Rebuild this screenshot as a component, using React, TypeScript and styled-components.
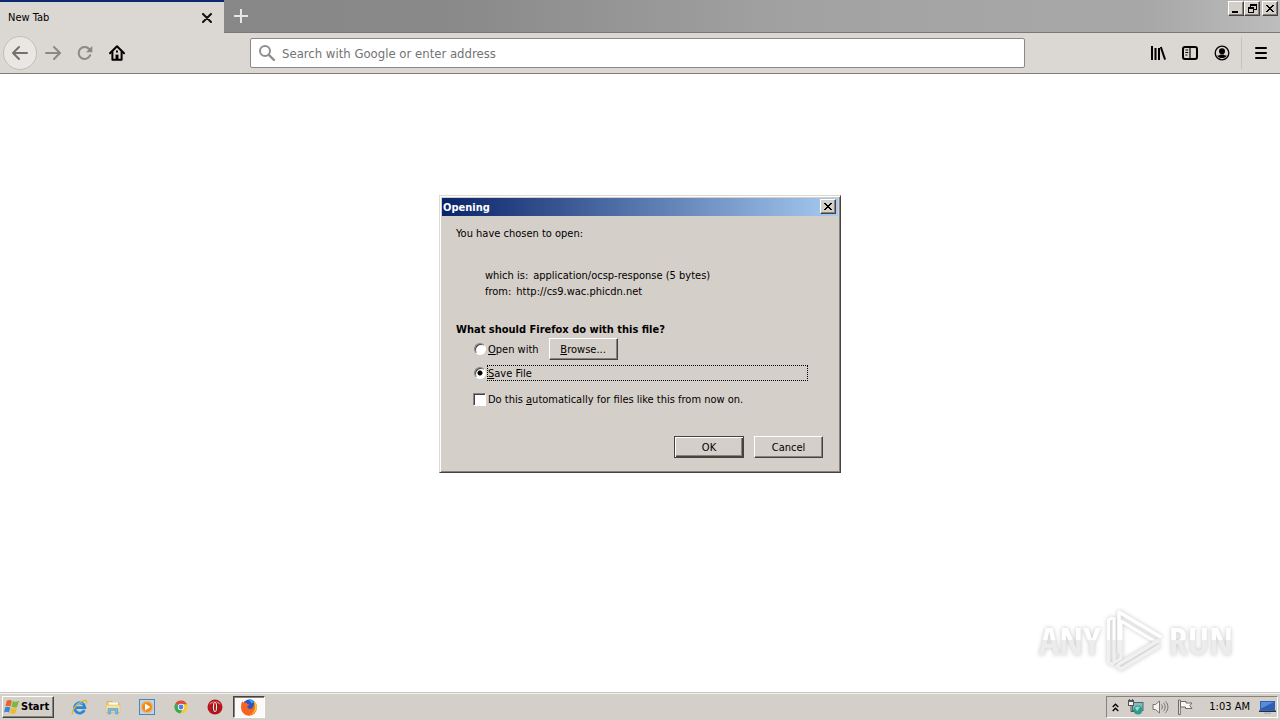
import React, { useState } from "react";
import styled, { createGlobalStyle, css } from "styled-components";

const GlobalStyle = createGlobalStyle`
  *, *::before, *::after { box-sizing: border-box; }
  body {
    margin: 0;
    background: #fff;
    color: #000;
    font-family: "DejaVu Sans Condensed", "DejaVu Sans", sans-serif;
    font-size: 11px;
    line-height: 16px;
  }
  button, input { font: inherit; color: inherit; margin: 0; padding: 0; border-radius: 0; }
  svg { display: block; flex: none; }
`;

const face = "#d5cfc9";

const raised = css`
  border: 1px solid;
  border-color: #fff #45423f #45423f #fff;
  box-shadow: inset -1px -1px 0 #86827d;
`;

const Screen = styled.div`
  display: flex;
  flex-direction: column;
  min-height: 100vh;
`;

/* ---------- Browser chrome ---------- */

const TabStrip = styled.header`
  display: flex;
  height: 33px;
  background: linear-gradient(90deg, #868686 0%, #898989 35%, #a2a2a2 62%, #a8a8a8 90%, #bdbdbd 100%);
`;

const Tab = styled.div`
  display: flex;
  align-items: center;
  justify-content: space-between;
  width: 224px;
  padding: 0 8px;
  border-top: 2px solid #0d2770;
  background: #dbd7d2;
`;

const StripRest = styled.div`
  flex: 1;
  display: flex;
  align-items: flex-start;
  justify-content: space-between;
  border-bottom: 1px solid #7c7975;
`;

const PlainButton = styled.button<{ $w: number; $h: number }>`
  display: flex;
  align-items: center;
  justify-content: center;
  width: ${(p) => p.$w}px;
  height: ${(p) => p.$h}px;
  border: 0;
  background: none;
`;

const WindowControls = styled.div`
  display: flex;
  padding: 1px 2px 0 0;
`;

const CaptionButton = styled.button<{ $gap?: boolean }>`
  ${raised}
  display: flex;
  align-items: center;
  justify-content: center;
  width: 16px;
  height: 15px;
  margin-left: ${(p) => (p.$gap ? 2 : 0)}px;
  background: ${face};
`;

const Toolbar = styled.nav`
  display: flex;
  align-items: center;
  height: 41px;
  padding: 0 3px;
  border-bottom: 1px solid #807d79;
  background: #dbd7d2;
`;

const ToolButton = styled.button<{ $round?: boolean }>`
  display: flex;
  flex: none;
  align-items: center;
  justify-content: center;
  width: ${(p) => (p.$round ? 34 : 32)}px;
  height: ${(p) => (p.$round ? 34 : 32)}px;
  border: ${(p) => (p.$round ? "1px solid #c2beb9" : "0")};
  border-radius: ${(p) => (p.$round ? "50%" : "0")};
  background: ${(p) => (p.$round ? "#e9e6e3" : "none")};
`;

const Spring = styled.div`
  flex: 1 1 0;
  max-width: 117px;
`;

const AddressBar = styled.label`
  flex: 5 1 0;
  display: flex;
  align-items: center;
  gap: 7px;
  height: 30px;
  padding: 0 8px;
  border: 1px solid #8b8885;
  border-radius: 2px;
  background: #fff;
`;

const AddressInput = styled.input`
  flex: 1;
  min-width: 0;
  height: 24px;
  border: 0;
  outline: 0;
  background: none;
  font-size: 13px;
  &::placeholder { color: #737373; opacity: 1; }
`;

const Divider = styled.span`
  width: 1px;
  height: 32px;
  margin: 0 3px;
  background: #c5c1bc;
`;

/* ---------- Page and dialog ---------- */

const Page = styled.main`
  position: relative;
  flex: 1;
  display: flex;
  flex-direction: column;
  align-items: center;
  padding: 121px 16px 24px;
  background: #fff;
`;

const Dialog = styled.section`
  width: 402px;
  max-width: 100%;
  padding: 1px;
  border: 1px solid;
  border-color: #dcd8d4 #45423f #45423f #dcd8d4;
  box-shadow: inset 1px 1px 0 #fff, inset -1px -1px 0 #86827d;
  background: ${face};
`;

const TitleBar = styled.header`
  display: flex;
  align-items: flex-start;
  justify-content: space-between;
  height: 18px;
  margin: 1px;
  padding: 1px 2px 0 1px;
  background: linear-gradient(90deg, #0a246a, #a6caf0);
  color: #fff;
`;

const DialogTitle = styled.h1`
  margin: 0;
  padding-top: 1px;
  font-size: 11px;
  font-weight: bold;
`;

const DialogBody = styled.form`
  padding: 9px 16px 13px 15px;
`;

const Line = styled.p`
  margin: 0;
`;

const Facts = styled.dl`
  margin: 26px 0 22px 29px;
`;

const Fact = styled.div`
  display: flex;
  gap: 5px;
  dt, dd { margin: 0; }
`;

const Choices = styled.fieldset`
  margin: 0;
  padding: 0;
  border: 0;
  min-width: 0;
`;

const Question = styled.legend`
  padding: 0;
  font-weight: bold;
`;

const ChoiceRow = styled.div<{ $top: number }>`
  display: flex;
  align-items: center;
  margin: ${(p) => p.$top}px 0 0 17px;
`;

const ChoiceLabel = styled.label<{ $focused?: boolean }>`
  display: block;
  width: ${(p) => (p.$focused ? "321px" : "auto")};
  height: 16px;
  margin-left: ${(p) => (p.$focused ? 1 : 2)}px;
  line-height: ${(p) => (p.$focused ? 16 : 18)}px;
  border: ${(p) => (p.$focused ? "1px dotted #000" : "0")};
`;

const Radio = styled.input`
  appearance: none;
  flex: none;
  width: 12px;
  height: 12px;
  margin-left: 1px;
  border: 1px solid;
  border-color: #86827d #fff #fff #86827d;
  border-radius: 50%;
  outline: 0;
  background: #fff;
  box-shadow: inset 1px 1px 0 #45423f;
  &:checked { background: radial-gradient(circle at 50% 50%, #000 2px, #fff 3px); }
`;

const CheckBox = styled.input`
  appearance: none;
  flex: none;
  width: 13px;
  height: 13px;
  border: 1px solid;
  border-color: #86827d #fff #fff #86827d;
  background: #fff;
  box-shadow: inset 1px 1px 0 #45423f;
  &:checked { background: linear-gradient(#000, #000) center / 6px 6px no-repeat #fff; }
`;

const PushButton = styled.button<{ $default?: boolean; $left?: number }>`
  ${raised}
  width: ${(p) => (p.$default ? 70 : 69)}px;
  height: 22px;
  padding-top: 1px;
  margin-left: ${(p) => p.$left ?? 0}px;
  line-height: 18px;
  background: ${face};
  ${(p) =>
    p.$default &&
    css`
      border-color: #45423f;
      box-shadow: inset 1px 1px 0 #fff, inset -1px -1px 0 #45423f, inset -2px -2px 0 #86827d;
    `}
`;

const Actions = styled.footer`
  display: flex;
  justify-content: flex-end;
  gap: 10px;
  margin-top: 29px;
`;

/* ---------- Watermark ---------- */

const Watermark = styled.div`
  position: absolute;
  right: 47px;
  bottom: 20px;
  display: flex;
  align-items: center;
  gap: 4px;
  filter: drop-shadow(0 0 2px #c4c4c4);
`;

const MarkWord = styled.span`
  font-family: "Open Sans Condensed", "Roboto Condensed", Roboto, sans-serif;
  font-size: 38px;
  line-height: 60px;
  font-weight: bold;
  color: transparent;
  background: linear-gradient(#fff 50%, #ececec 50%);
  background-clip: text;
`;

/* ---------- Taskbar ---------- */

const Taskbar = styled.footer`
  display: flex;
  align-items: center;
  height: 28px;
  padding: 2px 2px 1px;
  border-top: 1px solid #c9c5c0;
  box-shadow: inset 0 1px 0 #f3f1ef;
  background: ${face};
`;

const StartButton = styled.button`
  ${raised}
  display: flex;
  align-items: center;
  gap: 1px;
  width: 52px;
  height: 22px;
  padding-left: 1px;
  background: ${face};
  font-weight: bold;
`;

const QuickLaunch = styled.div`
  display: flex;
  margin-left: 8px;
`;

const TaskButton = styled.button<{ $active?: boolean }>`
  display: flex;
  align-items: center;
  justify-content: center;
  width: ${(p) => (p.$active ? 32 : 34)}px;
  height: 22px;
  margin-left: ${(p) => (p.$active ? 1 : 0)}px;
  border: ${(p) => (p.$active ? "1px solid" : "0")};
  border-color: #45423f #fff #fff #45423f;
  background: ${(p) => (p.$active ? "#fbfaf9" : "none")};
  box-shadow: ${(p) => (p.$active ? "inset 1px 1px 0 #86827d" : "none")};
`;

const Tray = styled.div`
  display: flex;
  align-items: center;
  height: 22px;
  margin-left: auto;
  padding: 0 1px 0 5px;
  border: 1px solid;
  border-color: #86827d #fff #fff #86827d;
`;

const TrayIcons = styled.div`
  display: flex;
  align-items: center;
  gap: 8px;
`;

const Clock = styled.time`
  margin: 0 9px 0 16px;
`;

/* ---------- Icons ---------- */

const CloseGlyph = () => (
  <svg width="8" height="7" viewBox="0 0 8 7" shapeRendering="crispEdges">
    <path d="M0 0h2v1h1v1h2V1h1V0h2v1H7v1H6v1H5v1h1v1h1v1h1v1H6V6H5V5H3v1H2v1H0V6h1V5h1V4h1V3H2V2H1V1H0z" />
  </svg>
);

const BackIcon = () => (
  <svg width="16" height="16" viewBox="0 0 16 16" fill="none" stroke="#73706d" strokeWidth="2" strokeLinecap="round" strokeLinejoin="round">
    <path d="M15 8H1.5M7 2L1 8l6 6" />
  </svg>
);
const ForwardIcon = () => (
  <svg width="16" height="16" viewBox="0 0 16 16" fill="none" stroke="#8b8885" strokeWidth="2" strokeLinecap="round" strokeLinejoin="round">
    <path d="M1 8h13.5M9 2l6 6-6 6" />
  </svg>
);
const ReloadIcon = () => (
  <svg width="16" height="16" viewBox="0 0 16 16">
    <path d="M13.2 10.2A6 6 0 1 1 12.2 4" fill="none" stroke="#8b8885" strokeWidth="2" strokeLinecap="round" />
    <path d="M15.3 1v6.2H9z" fill="#8b8885" />
  </svg>
);
const HomeIcon = () => (
  <svg width="16" height="16" viewBox="0 0 16 16" fill="none" stroke="#000" strokeWidth="2" strokeLinejoin="round" strokeLinecap="round">
    <path d="M1 8.2L8 1.3l7 6.9" />
    <path d="M3.4 7v7.800h9.200V7" />
    <path d="M8 14V9.600" strokeWidth="3" strokeLinecap="butt" />
    <path d="M8 6.300v.4" />
  </svg>
);
const SearchIcon = () => (
  <svg width="16" height="16" viewBox="0 0 16 16" fill="none" stroke="#8f8f8f" strokeWidth="2" strokeLinecap="round">
    <circle cx="6" cy="6" r="5" />
    <path d="M9.800 9.800L15 15" strokeWidth="2.400" />
  </svg>
);
const LibraryIcon = () => (
  <svg width="16" height="16" viewBox="0 0 16 16" stroke="#000" strokeWidth="2">
    <path d="M2 1v14M5.500 3v12M9 3v12" />
    <path d="M10.800 2l4.300 12.600" />
  </svg>
);
const SidebarIcon = () => (
  <svg width="16" height="16" viewBox="0 0 16 16" fill="none" stroke="#000">
    <rect x="1" y="2" width="14" height="12" rx="2" strokeWidth="2" />
    <path d="M8 2v12" strokeWidth="1.200" />
    <path d="M3.400 5h2.800M3.400 7.500h2.800M3.400 10h2" />
  </svg>
);
const AccountIcon = () => (
  <svg width="16" height="16" viewBox="0 0 16 16">
    <circle cx="8" cy="8" r="6.800" fill="none" stroke="#000" strokeWidth="1.300" />
    <circle cx="8" cy="6.200" r="3" />
    <path d="M3.200 10.400c1.400.2 2.600-.4 3.200-1h3.200c.6.6 1.800 1.200 3.200 1A5.600 5.600 0 0 1 3.200 10.400z" />
  </svg>
);
const MenuIcon = () => (
  <svg width="12" height="12" viewBox="0 0 12 12" stroke="#000" strokeWidth="2" strokeLinecap="round">
    <path d="M1 1h10M1 6h10M1 11h10" />
  </svg>
);

const WindowsFlag = () => (
  <svg width="16" height="16" viewBox="0 0 16 16">
    <path d="M2.800 1.600c1.800-1 3.400-.9 5 .1L6.600 7.400c-1.700-1-3.300-1-5.100-.1z" fill="#e8622c" />
    <path d="M8.700 2.100c1.700 1 3.400.9 6.300 0l-1.800 5.800c-1.800.9-4 .9-5.700-.1z" fill="#7db93a" />
    <path d="M1.200 8.300c1.800-.9 3.400-.8 5.100.1L5 13.500c-1.700-1-3.300-1-5-.1z" fill="#3d86cf" />
    <path d="M7.200 8.800c1.700 1 3.400 1 5.700.1l-1.500 5.300c-1.800.9-3.800.9-5.400-.1z" fill="#f3b92c" />
  </svg>
);
const ExplorerE = () => (
  <svg width="17" height="17" viewBox="0 0 17 17" fill="none">
    <path d="M13.400 11.200a5.200 5.200 0 1 1 .5-2.500H4.300" stroke="#2b86d3" strokeWidth="2.800" />
    <path d="M1.700 15.400C-.3 12 6.600 3.600 12.700 1.600c2.600-.8 3.500.4 2.500 2.900" stroke="#e2b33a" strokeWidth="1.300" />
    <path d="M4.500 6.500A5.200 5.200 0 0 1 12 4.800" stroke="#6db9ee" strokeWidth="1" />
  </svg>
);
const FolderIcon = () => (
  <svg width="16" height="16" viewBox="0 0 16 16">
    <path d="M2 2.500h5l1.200 1.700H14V13H2z" fill="#ecd083" stroke="#c7a452" strokeWidth=".6" />
    <path d="M4 3.500h9v4H4z" fill="#fdfbe9" />
    <path d="M1 6h14v7.500H1z" fill="#f5e1a0" stroke="#d4b563" strokeWidth=".5" />
    <path d="M3 15V9.500h10V15h-2.600v-3.200H5.600V15z" fill="#78b9e4" stroke="#4d93c7" strokeWidth=".5" />
  </svg>
);
const MediaIcon = () => (
  <svg width="16" height="16" viewBox="0 0 16 16">
    <rect x=".5" y=".5" width="15" height="15" fill="#b9d6ee" stroke="#4a86bd" />
    <circle cx="8" cy="8" r="6" fill="#f08b1d" />
    <circle cx="8" cy="8" r="5.500" fill="none" stroke="#fbc06a" />
    <path d="M6 4.600L11.300 8 6 11.400z" fill="#fff" />
  </svg>
);
const ChromeIcon = () => (
  <svg width="14" height="14" viewBox="0 0 14 14">
    <circle cx="7" cy="7" r="6.500" fill="#f7cb2d" />
    <path d="M7 7L1.300 3.800A6.500 6.500 0 0 1 12.900 4.300H7z" fill="#dd4b3b" />
    <path d="M7 7L1.300 3.800A6.500 6.500 0 0 0 6.200 13.450L9.300 8.600z" fill="#3aa757" />
    <circle cx="7" cy="7" r="3.200" fill="#fff" />
    <circle cx="7" cy="7" r="2.400" fill="#4a83e8" />
  </svg>
);
const OperaIcon = () => (
  <svg width="16" height="16" viewBox="0 0 16 16">
    <circle cx="8" cy="8" r="7.500" fill="#b5161d" />
    <path d="M2 5.500C3.500 1 12.500 1 14 5.500 11 4 5 4 2 5.500z" fill="#e06a6c" />
    <ellipse cx="8" cy="8" rx="3.200" ry="5.600" fill="#7b0a10" />
    <ellipse cx="8" cy="8" rx="2.200" ry="5.100" fill="#f3e6e4" />
    <ellipse cx="8" cy="8" rx="1" ry="4.200" fill="#b5161d" />
  </svg>
);
const FirefoxIcon = () => (
  <svg width="18" height="18" viewBox="0 0 18 18">
    <circle cx="9.300" cy="8.200" r="6.700" fill="#3152c4" />
    <path d="M8.500 1.500c2.600-.6 5 .6 6 2.500l-3 1.500z" fill="#2aa3e8" />
    <path d="M2.300 3.200c.5.900 1 1.300 1.800 1.500 1.300-.4 2.600.1 3.200 1.300l2 .5c-.5 1.200-1.700 1.200-2.100 2 .3 2 2 2.800 3.800 2.200 1.500-.5 2.500-1.700 2.300-3.700l1.300.9-.5-4.700c2.200 1.700 3.200 4 2.800 7A7.900 7.900 0 0 1 1.100 9.300c-.2-2.300.2-4.300 1.200-6.100z" fill="#f4661f" />
    <path d="M14 3.200c2.200 1.700 3.200 4 2.800 7-.8 3.700-3.500 6-7 6.500 3.200-1.700 5.200-4 5-7.500z" fill="#fbc52c" />
    <path d="M1.100 9.300c.6 3.600 3.400 6 6.900 6.300A7.900 7.900 0 0 1 1.100 9.300z" fill="#d9263f" />
  </svg>
);
const Chevrons = () => (
  <svg width="7" height="9" viewBox="0 0 7 9" fill="none" stroke="#000" strokeWidth="1.300">
    <path d="M.7 4L3.500 1.200 6.300 4M.7 8l2.800-2.800L6.300 8" />
  </svg>
);
const NetworkIcon = () => (
  <svg width="17" height="16" viewBox="0 0 17 16">
    <rect x="5.500" y="3.500" width="10.500" height="8" fill="#7dbcc0" stroke="#526769" />
    <path d="M1 1.500h6M2.500 0v3M5.500 0v3" stroke="#555" />
    <rect x="1.500" y="2.500" width="5" height="4" fill="#f2f2f2" stroke="#555" />
    <path d="M4 6.500v6h3" fill="none" stroke="#555" />
    <circle cx="11" cy="11" r="4.500" fill="#2c9c8c" />
    <path d="M8 9c1.500-2 4-2 5-.5-1.500 1-1.500 2.500-3 3.500C9 11 9 10 8 9z" fill="#9bd8c6" />
  </svg>
);
const SpeakerIcon = () => (
  <svg width="17" height="16" viewBox="0 0 17 16" fill="none" stroke="#77736f">
    <path d="M1 5.500h2.500L7.500 2v12l-4-3.500H1z" fill="#f5f4f2" />
    <path d="M9.500 5.500c1.200 1.500 1.200 3.500 0 5M11.500 3.800c2.200 2.400 2.200 6 0 8.400M13.500 2.200c3.200 3.400 3.200 8.200 0 11.600" />
  </svg>
);
const FlagIcon = () => (
  <svg width="16" height="16" viewBox="0 0 16 16" fill="#f8f7f5" stroke="#6e6a66">
    <path d="M1.500 1v14.500h1.800V1z" />
    <path d="M3.500 2.500H9V4h6l-2.200 2.700L15 9.500H8.500V8h-5z" />
  </svg>
);
const DesktopIcon = () => (
  <svg width="17" height="15" viewBox="0 0 17 15">
    <path d="M1 1h15v9.500H1z" fill="#2d5fb4" />
    <path d="M2 2h13L2 8.500z" fill="#5a8dd8" />
    <path d="M0 10.500h17V12H0z" fill="#1c2f57" />
    <path d="M5 12.500h7V14H5z" fill="#a9b2c2" />
  </svg>
);

const MarkIcon = () => (
  <svg width="60" height="64" viewBox="0 0 60 64" fill="none" strokeLinejoin="round">
    <defs>
      <linearGradient id="mark" x1="0" y1="0" x2="0" y2="64" gradientUnits="userSpaceOnUse">
        <stop offset=".5" stopColor="#fff" />
        <stop offset=".5" stopColor="#f0f0f0" />
      </linearGradient>
    </defs>
    <path d="M8 9.500L3.500 12v42.500l5 2.500" stroke="url(#mark)" strokeWidth="3" />
    <path d="M14 44V4l41 24.500" stroke="url(#mark)" strokeWidth="3.500" strokeLinecap="round" />
    <path d="M9 9.500v45l7-4V13L51 34" stroke="url(#mark)" strokeWidth="3" />
    <path d="M53 33L14 56M54 38L16 61l-4-3" stroke="url(#mark)" strokeWidth="3.500" strokeLinecap="round" />
  </svg>
);

export default function App() {
  const [choice, setChoice] = useState("save");
  return (
    <Screen>
      <GlobalStyle />
      <TabStrip>
        <Tab>
          <span>New Tab</span>
          <PlainButton $w={18} $h={18} aria-label="Close tab">
            <svg width="10" height="10" viewBox="0 0 10 10" stroke="#111" strokeWidth="2" strokeLinecap="round">
              <path d="M1 1l8 8M9 1L1 9" />
            </svg>
          </PlainButton>
        </Tab>
        <StripRest>
          <PlainButton $w={34} $h={32} aria-label="Open a new tab">
            <svg width="14" height="14" viewBox="0 0 14 14" stroke="#e6e6e6" strokeWidth="2">
              <path d="M7 0v14M0 7h14" />
            </svg>
          </PlainButton>
          <WindowControls>
            <CaptionButton aria-label="Minimize">
              <svg width="8" height="8" viewBox="0 0 8 8">
                <path d="M0 6h6v2H0z" />
              </svg>
            </CaptionButton>
            <CaptionButton aria-label="Restore">
              <svg width="9" height="9" viewBox="0 0 9 9" fill="none" stroke="#000" shapeRendering="crispEdges">
                <path d="M2.500 3V.5h6v5H6M2 1.500h7M.5 3.500h5v5h-5zM0 4.500h6" />
              </svg>
            </CaptionButton>
            <CaptionButton $gap aria-label="Close">
              <CloseGlyph />
            </CaptionButton>
          </WindowControls>
        </StripRest>
      </TabStrip>

      <Toolbar aria-label="Navigation">
        <ToolButton $round aria-label="Back"><BackIcon /></ToolButton>
        <ToolButton aria-label="Forward"><ForwardIcon /></ToolButton>
        <ToolButton aria-label="Reload"><ReloadIcon /></ToolButton>
        <ToolButton aria-label="Home"><HomeIcon /></ToolButton>
        <Spring />
        <AddressBar>
          <SearchIcon />
          <AddressInput type="text" aria-label="Address" placeholder="Search with Google or enter address" />
        </AddressBar>
        <Spring />
        <ToolButton aria-label="Library"><LibraryIcon /></ToolButton>
        <ToolButton aria-label="Sidebars"><SidebarIcon /></ToolButton>
        <ToolButton aria-label="Account"><AccountIcon /></ToolButton>
        <Divider />
        <ToolButton aria-label="Menu"><MenuIcon /></ToolButton>
      </Toolbar>

      <Page>
        <Dialog role="dialog" aria-labelledby="dialog-title">
          <TitleBar>
            <DialogTitle id="dialog-title">Opening</DialogTitle>
            <CaptionButton aria-label="Close dialog">
              <CloseGlyph />
            </CaptionButton>
          </TitleBar>
          <DialogBody onSubmit={(e) => e.preventDefault()}>
            <Line>You have chosen to open:</Line>
            <Facts>
              <Fact>
                <dt>which is:</dt>
                <dd>application/ocsp-response (5 bytes)</dd>
              </Fact>
              <Fact>
                <dt>from:</dt>
                <dd>http://cs9.wac.phicdn.net</dd>
              </Fact>
            </Facts>
            <Choices>
              <Question>What should Firefox do with this file?</Question>
              <ChoiceRow $top={0}>
                <Radio type="radio" name="action" id="open" checked={choice === "open"} onChange={() => setChoice("open")} />
                <ChoiceLabel htmlFor="open"><u>O</u>pen with</ChoiceLabel>
                <PushButton type="button" $left={10}><u>B</u>rowse...</PushButton>
              </ChoiceRow>
              <ChoiceRow $top={5}>
                <Radio type="radio" name="action" id="save" checked={choice === "save"} onChange={() => setChoice("save")} />
                <ChoiceLabel htmlFor="save" $focused><u>S</u>ave File</ChoiceLabel>
              </ChoiceRow>
              <ChoiceRow $top={10}>
                <CheckBox type="checkbox" id="auto" />
                <ChoiceLabel htmlFor="auto">Do this <u>a</u>utomatically for files like this from now on.</ChoiceLabel>
              </ChoiceRow>
            </Choices>
            <Actions>
              <PushButton type="submit" $default>OK</PushButton>
              <PushButton type="button">Cancel</PushButton>
            </Actions>
          </DialogBody>
        </Dialog>
        <Watermark>
          <MarkWord>ANY</MarkWord>
          <MarkIcon />
          <MarkWord>RUN</MarkWord>
        </Watermark>
      </Page>

      <Taskbar>
        <StartButton><WindowsFlag />Start</StartButton>
        <QuickLaunch>
          <TaskButton aria-label="Internet Explorer"><ExplorerE /></TaskButton>
          <TaskButton aria-label="File Explorer"><FolderIcon /></TaskButton>
          <TaskButton aria-label="Media Player"><MediaIcon /></TaskButton>
          <TaskButton aria-label="Chrome"><ChromeIcon /></TaskButton>
          <TaskButton aria-label="Opera"><OperaIcon /></TaskButton>
          <TaskButton $active aria-label="Firefox"><FirefoxIcon /></TaskButton>
        </QuickLaunch>
        <Tray>
          <TrayIcons>
            <Chevrons />
            <NetworkIcon />
            <SpeakerIcon />
            <FlagIcon />
          </TrayIcons>
          <Clock>1:03 AM</Clock>
          <DesktopIcon />
        </Tray>
      </Taskbar>
    </Screen>
  );
}
